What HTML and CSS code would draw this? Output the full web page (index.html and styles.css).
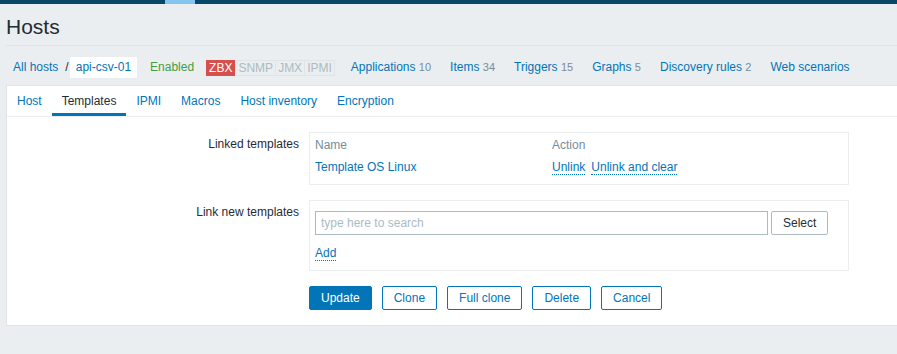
FILE: index.html
```html
<!DOCTYPE html>
<html>
<head>
<meta charset="utf-8">
<title>Hosts</title>
<link rel="stylesheet" href="styles.css">
</head>
<body>
<div class="topbar">
  <span class="topbar-dark"></span>
  <span class="topbar-active"></span>
  <span class="topbar-dark"></span>
</div>
<header class="page-header">
  <h1>Hosts</h1>
</header>
<nav class="host-nav">
  <a class="link" href="#">All hosts</a>
  <span class="crumb-sep">/</span>
  <span class="host-box">api-csv-01</span>
  <span class="status-enabled">Enabled</span>
  <span class="availability">
    <span class="av av-red">ZBX</span><span class="av av-grey av-first">SNMP</span><span class="av av-grey">JMX</span><span class="av av-grey">IPMI</span>
  </span>
  <span class="nav-links">
    <a class="link" href="#">Applications <span class="count">10</span></a>
    <a class="link" href="#">Items <span class="count">34</span></a>
    <a class="link" href="#">Triggers <span class="count">15</span></a>
    <a class="link" href="#">Graphs <span class="count">5</span></a>
    <a class="link" href="#">Discovery rules <span class="count">2</span></a>
    <a class="link" href="#">Web scenarios</a>
  </span>
</nav>
<main class="panel">
  <ul class="tabs">
    <li class="tab">Host</li>
    <li class="tab tab-active">Templates</li>
    <li class="tab">IPMI</li>
    <li class="tab">Macros</li>
    <li class="tab">Host inventory</li>
    <li class="tab">Encryption</li>
  </ul>
  <div class="form-grid">
    <div class="form-label">Linked templates</div>
    <div class="form-box linked">
      <table class="linked-table">
        <thead>
          <tr><th class="col-name">Name</th><th>Action</th></tr>
        </thead>
        <tbody>
          <tr>
            <td class="col-name"><a class="link" href="#">Template OS Linux</a></td>
            <td><a class="dotted" href="#">Unlink</a><a class="dotted dotted-next" href="#">Unlink and clear</a></td>
          </tr>
        </tbody>
      </table>
    </div>
    <div class="form-label">Link new templates</div>
    <div class="form-box link-new">
      <div class="search-row">
        <input class="search-input" type="text" placeholder="type here to search">
        <button class="btn btn-grey" type="button">Select</button>
      </div>
      <div class="add-row"><a class="dotted" href="#">Add</a></div>
    </div>
    <div class="button-row">
      <button class="btn btn-primary" type="button">Update</button>
      <button class="btn btn-alt" type="button">Clone</button>
      <button class="btn btn-alt" type="button">Full clone</button>
      <button class="btn btn-alt" type="button">Delete</button>
      <button class="btn btn-alt" type="button">Cancel</button>
    </div>
  </div>
</main>
</body>
</html>
```
FILE: styles.css
```css
* { box-sizing: border-box; }

html, body {
  margin: 0;
  padding: 0;
  background: #ebeef0;
  color: #1f2c33;
  font-family: "Liberation Sans", Arial, sans-serif;
  font-size: 12px;
  line-height: 14px;
}

a { text-decoration: none; }

.link { color: #0275b8; }

.topbar {
  display: grid;
  grid-template-columns: 165px 30px 1fr;
  height: 4px;
}
.topbar-dark { background: #0a466a; }
.topbar-active { background: #85c5f2; }

.page-header {
  margin-left: 6px;
  padding: 11px 0 6px;
  border-bottom: 1px solid #dfe4e7;
}
.page-header h1 {
  margin: 0;
  font-size: 21px;
  line-height: 24px;
  font-weight: normal;
  color: #1f2c33;
}

.host-nav {
  display: flex;
  align-items: center;
  height: 21px;
  line-height: 21px;
  margin: 11px 0 7px 13px;
  white-space: nowrap;
}
.crumb-sep {
  margin: 0 1px 0 7px;
  color: #1f2c33;
}
.host-box {
  background: #ffffff;
  color: #0275b8;
  padding: 0 6px;
  height: 21px;
}
.status-enabled {
  color: #429e47;
  margin-left: 13px;
}
.availability {
  display: flex;
  margin-left: 12px;
  line-height: 14px;
}
.av {
  display: block;
  height: 16px;
  line-height: 14px;
  padding: 1px 3px;
}
.av-red {
  background: #d64e4e;
  color: #ffffff;
}
.av-grey {
  color: #acbbc2;
  border: 1px solid #dfe4e7;
  border-left: none;
  padding: 0 2px;
}
.av-grey.av-first { border-left: 1px solid #dfe4e7; }

.nav-links {
  display: flex;
  gap: 19px;
  margin-left: 16px;
}
.count {
  color: #768d99;
  font-size: 11px;
}

.panel {
  margin-left: 6px;
  background: #ffffff;
  border: 1px solid #dfe4e7;
  border-right: none;
}

.tabs {
  display: flex;
  list-style: none;
  margin: 0;
  padding: 0;
  border-bottom: 1px solid #ebeef0;
}
.tab {
  padding: 8px 10px 5px;
  color: #0275b8;
  border-bottom: 3px solid transparent;
}
.tab-active {
  color: #1f2c33;
  border-bottom-color: #0275b8;
}

.form-grid {
  display: grid;
  grid-template-columns: 292px 540px;
  column-gap: 10px;
  row-gap: 15px;
  padding: 15px 0;
}
.form-label {
  text-align: right;
  padding-top: 5px;
}
.form-box {
  border: 1px solid #ebeef0;
}

.linked { padding: 1px 5px 6px; }
.linked-table {
  border-collapse: collapse;
  width: 100%;
}
.linked-table th,
.linked-table td {
  padding: 4px 0;
  text-align: left;
  font-weight: normal;
}
.linked-table th { color: #768d99; }
.col-name { width: 237px; }

.dotted {
  color: #0275b8;
  border-bottom: 1px dotted #0275b8;
}
.dotted-next { margin-left: 6px; }

.link-new { padding: 10px 5px 10px; }
.search-row { display: flex; }
.search-input {
  width: 453px;
  height: 24px;
  border: 1px solid #acbbc2;
  padding: 0 5px;
  font-family: "Liberation Sans", Arial, sans-serif;
  font-size: 12px;
  color: #1f2c33;
  outline: none;
}
.search-input::placeholder { color: #acbbc2; }
.search-row .btn { margin-left: 3px; }
.add-row { margin-top: 11px; }

.button-row {
  grid-column: 2;
  display: flex;
  gap: 10px;
}
.btn {
  height: 24px;
  padding: 0 11px;
  border-radius: 2px;
  font-family: "Liberation Sans", Arial, sans-serif;
  font-size: 12px;
  line-height: 22px;
  cursor: pointer;
}
.btn-grey {
  background: #ffffff;
  border: 1px solid #acbbc2;
  color: #1f2c33;
}
.btn-primary {
  background: #0275b8;
  border: 1px solid #0275b8;
  color: #ffffff;
}
.btn-alt {
  background: #ffffff;
  border: 1px solid #0275b8;
  color: #0275b8;
}
```
